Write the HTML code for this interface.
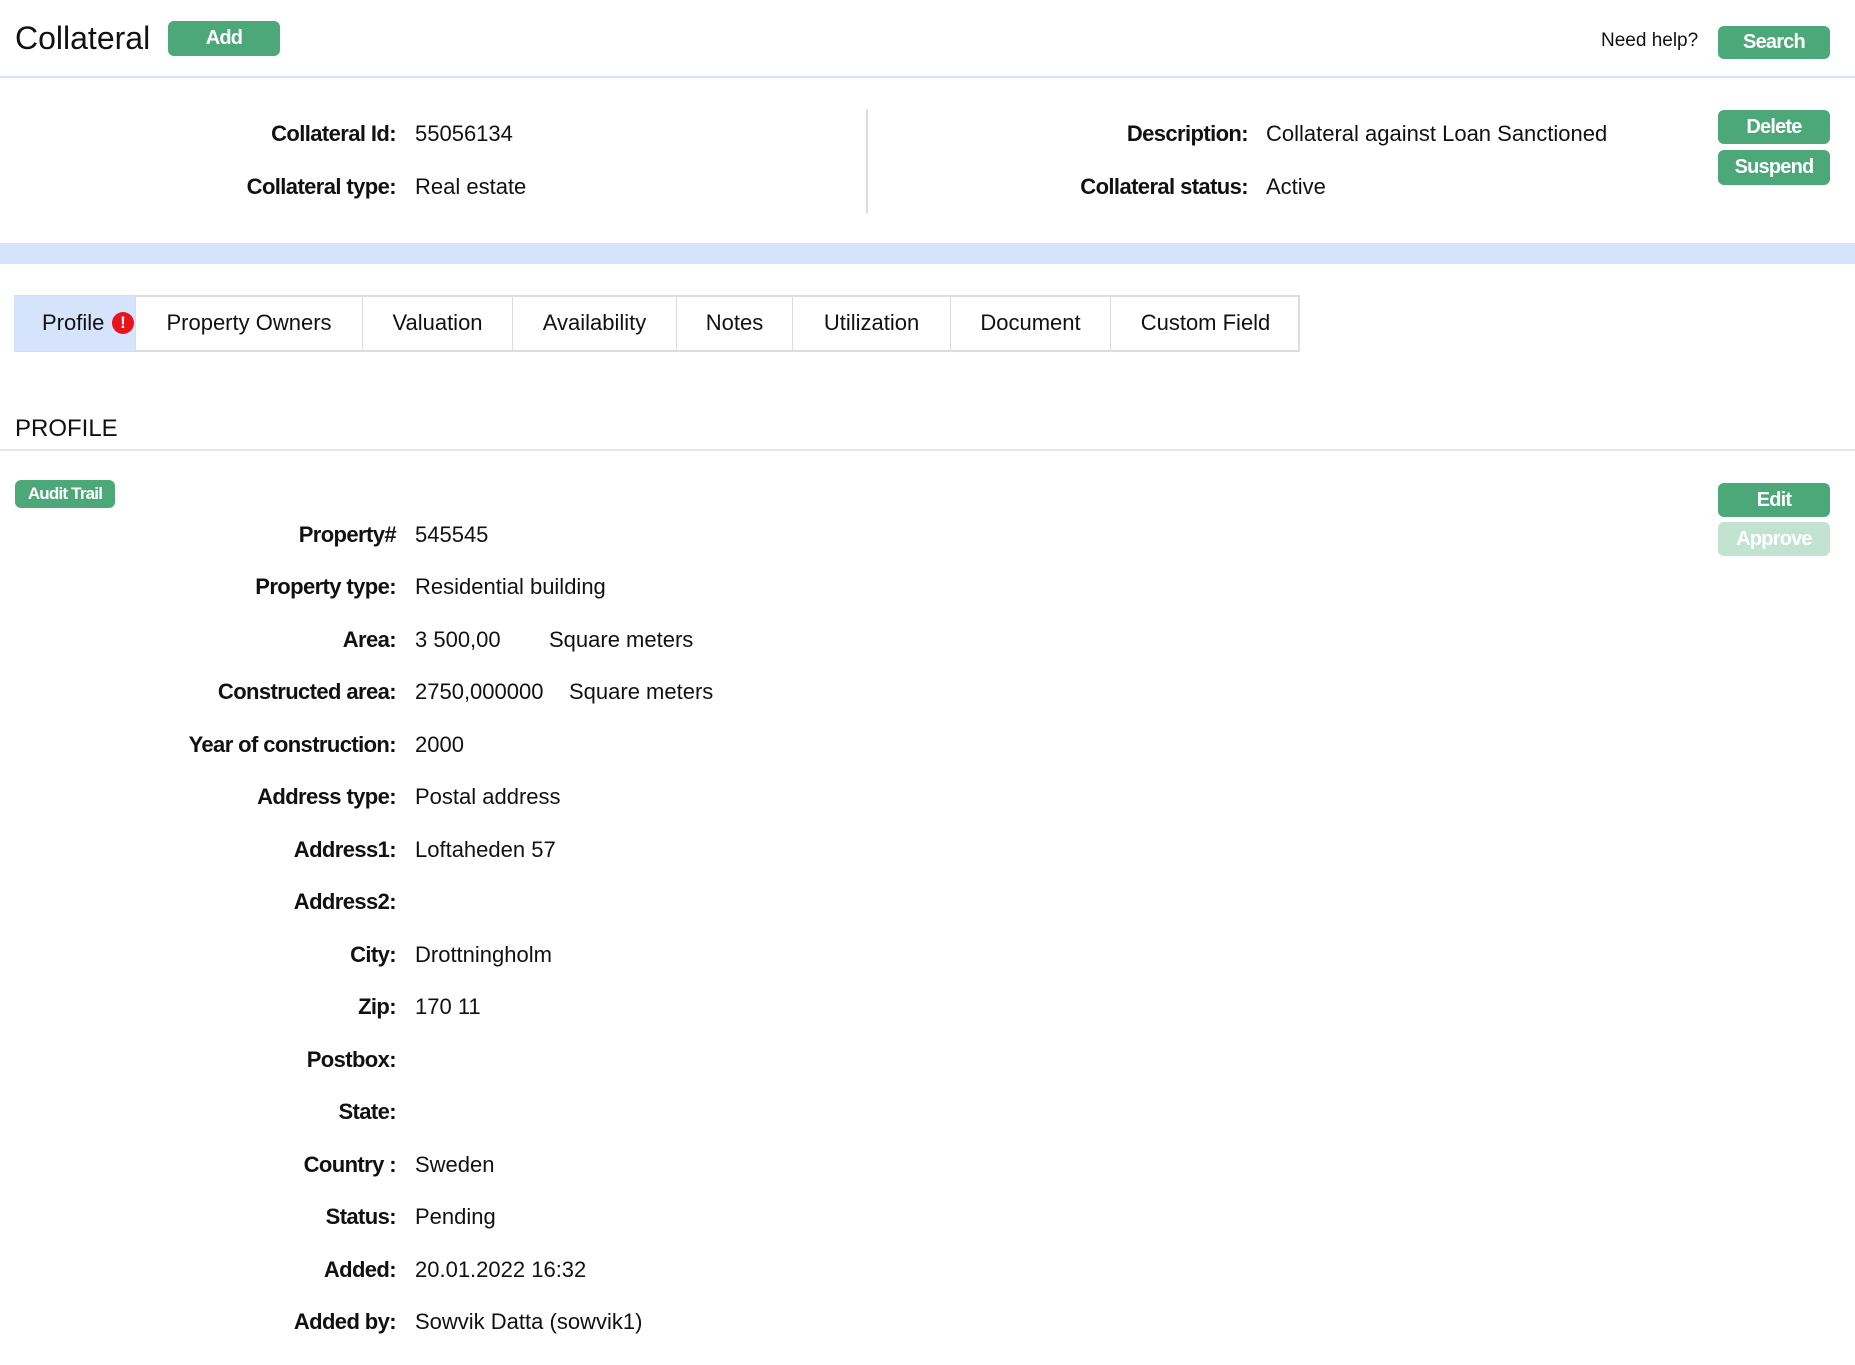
<!DOCTYPE html>
<html><head><meta charset="utf-8"><style>
*{margin:0;padding:0;box-sizing:border-box}
body{width:1855px;height:1365px;background:#fff;font-family:"Liberation Sans",sans-serif;color:#111;position:relative;overflow:hidden;letter-spacing:-0.6px}
.a{position:absolute;white-space:nowrap}
.btn{position:absolute;background:#4ca878;color:#fff;font-weight:bold;border-radius:6px;text-align:center;font-size:20px;letter-spacing:-0.8px}
.lab{position:absolute;right:1459px;font-weight:bold;font-size:22px;white-space:nowrap;transform:translateY(-50%)}
.val{position:absolute;left:415px;font-size:22px;white-space:nowrap;transform:translateY(-50%);letter-spacing:0}
.tab{position:absolute;top:296px;height:55px;line-height:53px;font-size:22px;text-align:center;border-right:1px solid #ddd;letter-spacing:0}
</style></head><body>
<div class="a" style="left:15px;top:20px;font-size:32px;letter-spacing:0">Collateral</div>
<div class="btn" style="left:168px;top:21px;width:112px;height:35px;line-height:35px">Add</div>
<div class="a" style="left:1601px;top:30px;font-size:19px;letter-spacing:0">Need help?</div>
<div class="btn" style="left:1718px;top:26px;width:112px;height:33px;line-height:33px">Search</div>
<div class="a" style="left:0;top:76px;width:1855px;height:2px;background:#d6e4fb"></div>

<div class="lab" style="top:134px;right:1459px">Collateral Id:</div>
<div class="val" style="top:134px">55056134</div>
<div class="lab" style="top:187px">Collateral type:</div>
<div class="val" style="top:187px">Real estate</div>
<div class="a" style="left:866px;top:109px;width:2px;height:104px;background:#ddd"></div>
<div class="lab" style="top:134px;right:607px">Description:</div>
<div class="val" style="top:134px;left:1266px">Collateral against Loan Sanctioned</div>
<div class="lab" style="top:187px;right:607px">Collateral status:</div>
<div class="val" style="top:187px;left:1266px">Active</div>
<div class="btn" style="left:1718px;top:110px;width:112px;height:34px;line-height:34px">Delete</div>
<div class="btn" style="left:1718px;top:150px;width:112px;height:35px;line-height:35px">Suspend</div>

<div class="a" style="left:0;top:243px;width:1855px;height:21px;background:#d6e4fb"></div>

<div class="a" style="left:14px;top:295px;width:1286px;height:57px;border:2px solid #ddd"></div>
<div class="tab" style="left:14px;width:122px;background:#d6e4fb;text-align:left;padding-left:28px">Profile<span style="position:absolute;left:98px;top:16px;width:22px;height:22px;border-radius:50%;background:#e8131b;color:#fff;font-weight:bold;font-size:17px;line-height:22px;text-align:center">!</span></div>
<div class="tab" style="left:136px;width:227px">Property Owners</div>
<div class="tab" style="left:363px;width:150px">Valuation</div>
<div class="tab" style="left:513px;width:164px">Availability</div>
<div class="tab" style="left:677px;width:116px">Notes</div>
<div class="tab" style="left:793px;width:158px">Utilization</div>
<div class="tab" style="left:951px;width:160px">Document</div>
<div class="tab" style="left:1111px;width:189px;border-right:none">Custom Field</div>

<div class="a" style="left:15px;top:415px;font-size:24px;letter-spacing:0">PROFILE</div>
<div class="a" style="left:0;top:449px;width:1855px;height:2px;background:#e6e6e6"></div>
<div class="btn" style="left:15px;top:480px;width:100px;height:28px;line-height:28px;font-size:17px">Audit Trail</div>
<div class="btn" style="left:1718px;top:483px;width:112px;height:34px;line-height:34px">Edit</div>
<div class="btn" style="left:1718px;top:522px;width:112px;height:34px;line-height:34px;background:#c3e3d2">Approve</div>

<div class="lab" style="top:535px">Property#</div><div class="val" style="top:535px">545545</div>
<div class="lab" style="top:587px">Property type:</div><div class="val" style="top:587px">Residential building</div>
<div class="lab" style="top:640px">Area:</div><div class="val" style="top:640px">3 500,00</div><div class="val" style="top:640px;left:549px">Square meters</div>
<div class="lab" style="top:692px">Constructed area:</div><div class="val" style="top:692px">2750,000000</div><div class="val" style="top:692px;left:569px">Square meters</div>
<div class="lab" style="top:745px">Year of construction:</div><div class="val" style="top:745px">2000</div>
<div class="lab" style="top:797px">Address type:</div><div class="val" style="top:797px">Postal address</div>
<div class="lab" style="top:850px">Address1:</div><div class="val" style="top:850px">Loftaheden 57</div>
<div class="lab" style="top:902px">Address2:</div>
<div class="lab" style="top:955px">City:</div><div class="val" style="top:955px">Drottningholm</div>
<div class="lab" style="top:1007px">Zip:</div><div class="val" style="top:1007px">170 11</div>
<div class="lab" style="top:1060px">Postbox:</div>
<div class="lab" style="top:1112px">State:</div>
<div class="lab" style="top:1165px">Country :</div><div class="val" style="top:1165px">Sweden</div>
<div class="lab" style="top:1217px">Status:</div><div class="val" style="top:1217px">Pending</div>
<div class="lab" style="top:1270px">Added:</div><div class="val" style="top:1270px">20.01.2022 16:32</div>
<div class="lab" style="top:1322px">Added by:</div><div class="val" style="top:1322px">Sowvik Datta (sowvik1)</div>
</body></html>
